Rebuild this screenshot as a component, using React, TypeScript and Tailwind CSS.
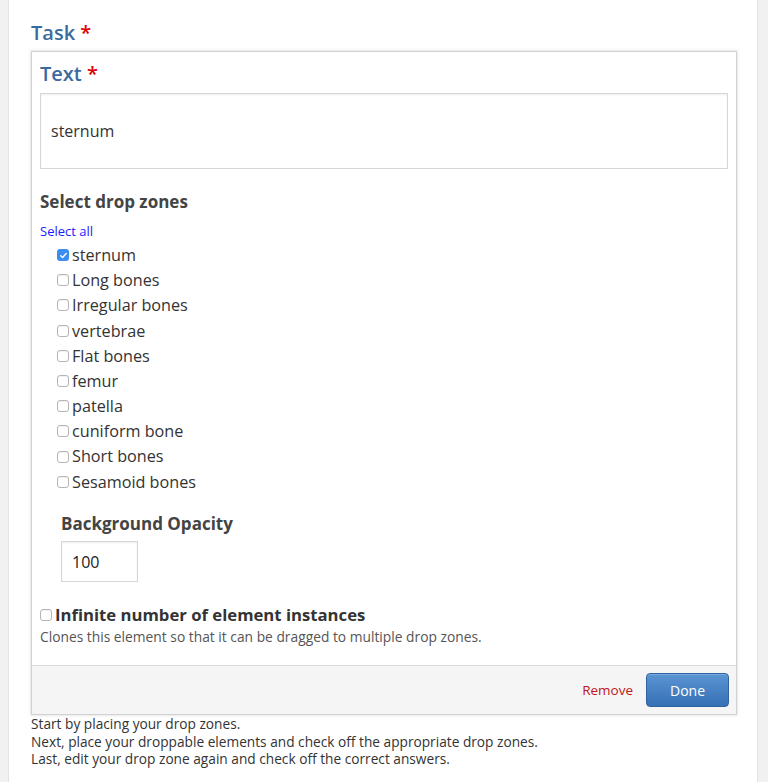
import React from "react";

const zones = [
  { label: "sternum", checked: true },
  { label: "Long bones" },
  { label: "Irregular bones" },
  { label: "vertebrae" },
  { label: "Flat bones" },
  { label: "femur" },
  { label: "patella" },
  { label: "cuniform bone" },
  { label: "Short bones" },
  { label: "Sesamoid bones" },
];

function Box({ checked }: { checked?: boolean }) {
  if (checked) {
    return (
      <span className="flex h-[12px] w-[12px] shrink-0 items-center justify-center rounded-[3px] bg-[#3b8ef0]">
        <svg width="9" height="9" viewBox="0 0 10 10" fill="none">
          <path d="M2 5.3l2 2 4-4.6" stroke="#fff" strokeWidth="1.6" strokeLinecap="round" strokeLinejoin="round" />
        </svg>
      </span>
    );
  }
  return <span className="h-[12px] w-[12px] shrink-0 rounded-[3px] border border-[#b5b5b5] bg-white shadow-[inset_0_1px_1px_rgba(0,0,0,0.06)]" />;
}

export default function App() {
  return (
    <div className="flex min-h-screen bg-[#f1f1f1] pl-[8px] pr-[10px] text-[#333] [font-family:'Open_Sans',sans-serif]">
      <div className="flex-1 border-x border-[#e3e3e3] bg-white pl-[22px] pr-[20px] pt-[20px] pb-[20px]">
        {/* Task header */}
        <div className="mb-[5px] h-[26px] text-[20px] font-semibold leading-[26px] text-[#3a6b9f]">
          Task <span className="text-[#e00000]">*</span>
        </div>

        {/* Card */}
        <div className="border border-[#d2d2d2] bg-white shadow-[0_0_3px_rgba(0,0,0,0.18)]">
          <div className="px-[8px] pt-[10px] pb-[19px]">
            <div className="mb-[7px] h-[24px] text-[20px] font-semibold leading-[24px] text-[#3a6b9f]">
              Text <span className="text-[#e00000]">*</span>
            </div>
            <div className="flex h-[76px] items-center border border-[#d6d6d6] bg-white pl-[10px] text-[16px] shadow-[inset_0_1px_2px_rgba(0,0,0,0.07)]">
              sternum
            </div>

            <div className="mt-[22px] h-[22px] text-[17px] font-bold leading-[22px] text-[#444]">Select drop zones</div>
            <div className="mt-[9px] h-[18px] text-[13px] leading-[18px] text-[#1a1aff]">Select all</div>

            <div className="mt-[2.5px] pl-[17px]">
              {zones.map((z) => (
                <div key={z.label} className="flex h-[25.2px] items-center gap-[3px] text-[16.2px] text-[#333]">
                  <Box checked={z.checked} />
                  <span>{z.label}</span>
                </div>
              ))}
            </div>

            <div className="pl-[21px]">
              <div className="mt-[19px] h-[22px] text-[17px] font-bold leading-[22px] text-[#444]">Background Opacity</div>
              <div className="mt-[6px] flex h-[41px] w-[77px] items-center border border-[#d6d6d6] bg-white pl-[10px] text-[16px] text-[#222] shadow-[inset_0_1px_2px_rgba(0,0,0,0.07)]">
                100
              </div>
            </div>

            <div className="mt-[22px] flex h-[22px] items-center gap-[3px]">
              <Box />
              <span className="text-[16.7px] font-bold leading-[22px] text-[#333]">Infinite number of element instances</span>
            </div>
            <div className="mt-[2px] h-[18px] text-[13.8px] leading-[18px] text-[#555]">
              Clones this element so that it can be dragged to multiple drop zones.
            </div>
          </div>

          {/* Footer */}
          <div className="flex h-[49px] items-center justify-end gap-[13px] border-t border-[#dcdcdc] bg-[#f5f5f5] pr-[7px]">
            <span className="text-[13.5px] text-[#c0141b]">Remove</span>
            <button className="h-[34px] w-[83px] rounded-[4px] border border-[#2f62a0] bg-gradient-to-b from-[#5b95d4] to-[#3670b5] text-[14px] text-white shadow-[inset_0_1px_0_rgba(255,255,255,0.2)]">
              Done
            </button>
          </div>
        </div>

        <div className="text-[13.7px] leading-[17.5px] text-[#333]">
          <div>Start by placing your drop zones.</div>
          <div>Next, place your droppable elements and check off the appropriate drop zones.</div>
          <div>Last, edit your drop zone again and check off the correct answers.</div>
        </div>
      </div>
    </div>
  );
}
